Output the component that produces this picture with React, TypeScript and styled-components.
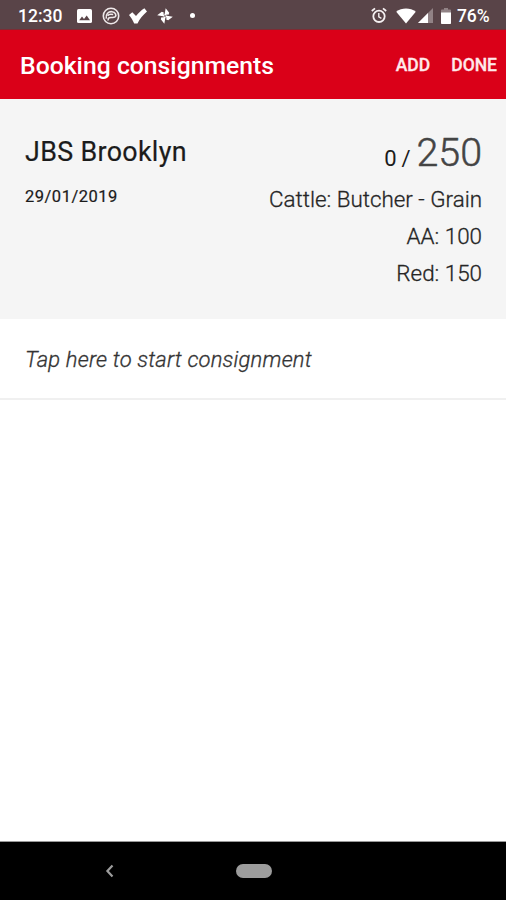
import React from 'react'
import styled, { createGlobalStyle } from 'styled-components'

const orders = ['Cattle: Butcher - Grain', 'AA: 100', 'Red: 150']

const App = () => {
  return (
    <Screen>
      <GlobalStyle />
      <StatusBar>
        <Clock>12:30</Clock>
        <Notifications>
          <PictureIcon />
          <SpiralIcon />
          <CheckIcon />
          <PinwheelIcon />
          <Dot />
        </Notifications>
        <SystemIcons>
          <AlarmIcon />
          <WifiIcon />
          <SignalIcon />
          <BatteryIcon />
        </SystemIcons>
        <Battery>76%</Battery>
      </StatusBar>
      <Header>
        <Title>Booking consignments</Title>
        <Action>ADD</Action>
        <Action>DONE</Action>
      </Header>
      <Summary>
        <div>
          <Company>JBS Brooklyn</Company>
          <BookingDate>29/01/2019</BookingDate>
        </div>
        <Totals>
          <Count>
            <Booked>0 /</Booked>
            <Total>250</Total>
          </Count>
          {orders.map((order) => (
            <Order key={order}>{order}</Order>
          ))}
        </Totals>
      </Summary>
      <StartRow>
        <StartText>Tap here to start consignment</StartText>
      </StartRow>
      <Content />
      <NavBar>
        <BackButton aria-label='Back'>
          <svg width='10' height='14' viewBox='0 0 10 14'>
            <path d='M7.5 1.5 2.4 7l5.1 5.5' fill='none' stroke='#9c9c9c' strokeWidth='2.2' />
          </svg>
        </BackButton>
        <HomeButton aria-label='Home' />
      </NavBar>
    </Screen>
  )
}

const PictureIcon = () => (
  <svg width='15' height='14' viewBox='0 0 15 14'>
    <rect width='15' height='14' rx='1.6' fill='#fff' />
    <path d='M2.2 11.3 5 7.6l2 2.3 2.7-3.5 3.3 4.9z' fill='#594448' />
  </svg>
)

const SpiralIcon = () => (
  <svg width='18' height='18' viewBox='0 0 18 18' fill='none' stroke='#eee8e9'>
    <circle cx='9' cy='9' r='7.7' strokeWidth='1.6' />
    <path d='M4.3 11.6C3.4 7 6.6 4.4 10 4.7c3.6.3 4.8 3.6 3 5.2-1.8 1.3-4-.1-5.8.9-1.1.6-1.3 1.6-1 2.6' strokeWidth='1.6' />
    <path d='M5.6 8.8c1.2-1.6 3.1-2 5.6-1.2' strokeWidth='1.6' />
  </svg>
)

const CheckIcon = () => (
  <svg width='18' height='16' viewBox='0 0 18 16'>
    <path d='M0 7 3.3 4.2 7 7.9C9.6 4.9 12.3 2.2 15.4.2L18 3.6c-4 3.4-7.2 7.3-9.5 11.8H5.2C3.8 12.4 2.2 9.6 0 7z' fill='#fff' />
  </svg>
)

// one blade, turned four times round the hub
const PinwheelIcon = () => (
  <svg width='16' height='16' viewBox='0 0 16 16'>
    {[0, 90, 180, 270].map((angle) => (
      <path key={angle} transform={`rotate(${angle + 10} 8 8)`} d='M7.3 7.5V.2l4.3 3.9-.3 2.1H9.2v1.6z' fill='#fff' />
    ))}
    <circle cx='8' cy='8' r='.8' fill='#594448' />
  </svg>
)

const AlarmIcon = () => (
  <svg width='16' height='17' viewBox='0 0 16 17' fill='none' stroke='#f5f0f1'>
    <circle cx='8' cy='9.3' r='5.7' strokeWidth='1.8' />
    <path d='M7.8 6v3.8l2.6 1.6' strokeWidth='1.4' />
    <path d='M.8 4 4 1.4M12 1.4 15.2 4' strokeWidth='1.8' />
  </svg>
)

const WifiIcon = () => (
  <svg width='20' height='16' viewBox='0 0 20 16'>
    <path d='M.2 3.7C5.8-.6 14.2-.6 19.8 3.7L10 15.4z' fill='#fff' />
  </svg>
)

const SignalIcon = () => (
  <svg width='15' height='15' viewBox='0 0 15 15'>
    <path d='M0 15 15 0v15z' fill='#918285' />
    <path d='M0 15 10 5v10z' fill='#fff' />
  </svg>
)

const BatteryIcon = () => (
  <svg width='10' height='16' viewBox='0 0 10 16'>
    <path d='M3 0h4v1.6h2.2c.5 0 .8.3.8.8V5H0V2.4c0-.5.3-.8.8-.8H3z' fill='#918285' />
    <path d='M0 4.5h10v10.7c0 .5-.3.8-.8.8H.8c-.5 0-.8-.3-.8-.8z' fill='#fff' />
  </svg>
)

const GlobalStyle = createGlobalStyle`
  * {
    box-sizing: border-box;
  }
  body {
    margin: 0;
    font-family: Roboto, "Liberation Sans", sans-serif;
    background-color: #fff;
  }
`

const Screen = styled.div`
  display: flex;
  flex-direction: column;
  width: 506px;
  height: 900px;
  overflow: hidden;
`

const StatusBar = styled.div`
  display: flex;
  align-items: center;
  flex: none;
  height: 30px;
  padding: 2px 16px 0 18px;
  color: #fff;
  background-color: #594448;
  border-bottom: 1px solid #7d2c34;
`

const Clock = styled.span`
  width: 59px;
  font-size: 17.5px;
  font-weight: 500;
`

const Notifications = styled.div`
  display: flex;
  align-items: center;
  gap: 9.5px;
`

const Dot = styled.i`
  width: 5px;
  height: 5px;
  margin-left: 8px;
  border-radius: 50%;
  background-color: #fff;
`

const SystemIcons = styled.div`
  display: flex;
  align-items: center;
  margin-left: auto;

  svg + svg {
    margin-left: 8.5px;
  }
  svg:nth-child(3) {
    margin-left: 2px;
  }
`

const Battery = styled.span`
  width: 33px;
  margin-left: 6px;
  font-size: 17.5px;
  font-weight: 500;
  letter-spacing: -0.1px;
  white-space: nowrap;
`

const Header = styled.header`
  display: flex;
  align-items: center;
  flex: none;
  height: 69px;
  padding: 2px 9px 0 20px;
  color: #fff;
  background-color: #da0018;
`

const Title = styled.h1`
  flex: 1;
  margin: 0;
  font-size: 24.75px;
  font-weight: 500;
`

const Action = styled.button`
  margin: -2px 0 0 21px;
  padding: 0;
  border: none;
  color: #ffe9eb;
  background: none;
  font-family: inherit;
  font-size: 17.5px;
  font-weight: 500;
  -webkit-text-stroke: 0.3px #ffe9eb;
`

const Summary = styled.section`
  display: flex;
  justify-content: space-between;
  flex: none;
  height: 220px;
  padding: 30px 24px 0 25px;
  color: #1b1b1b;
  background-color: #f5f5f5;
`

const Company = styled.h2`
  margin: 7px 0 0;
  font-size: 26.8px;
  font-weight: 400;
  line-height: 32px;
  letter-spacing: 0.35px;
  -webkit-text-stroke: 0.2px #1b1b1b;
`

const BookingDate = styled.div`
  margin-top: 17px;
  font-size: 16.5px;
  line-height: 24px;
  letter-spacing: 0.5px;
  -webkit-text-stroke: 0.2px #1b1b1b;
`

const Totals = styled.div`
  text-align: right;
`

const Count = styled.div`
  display: flex;
  justify-content: flex-end;
  align-items: baseline;
  gap: 6px;
  height: 52px;
  line-height: 48px;
`

const Booked = styled.span`
  font-size: 22px;
  letter-spacing: -0.2px;
`

const Total = styled.span`
  color: #444;
  font-size: 39.4px;
  font-weight: 300;
  -webkit-text-stroke: 0.5px #444;
`

const Order = styled.div`
  color: #252525;
  font-size: 22.4px;
  font-weight: 300;
  line-height: 37px;
  -webkit-text-stroke: 0.3px #252525;
`

const StartRow = styled.div`
  display: flex;
  align-items: center;
  flex: none;
  height: 81px;
  padding: 2px 0 0 25px;
  border-bottom: 2px solid #f0f0f0;
`

const StartText = styled.span`
  color: #333;
  font-size: 22px;
  font-style: italic;
  font-weight: 300;
  letter-spacing: 0.18px;
  -webkit-text-stroke: 0.3px #333;
`

const Content = styled.main`
  flex: 1;
`

const NavBar = styled.nav`
  display: flex;
  align-items: center;
  flex: none;
  height: 59px;
  padding-left: 105px;
  border-top: 1px solid #999;
  background-color: #000;
`

const BackButton = styled.button`
  display: flex;
  margin: 0;
  padding: 0;
  border: none;
  background: none;
`

const HomeButton = styled.button`
  width: 36px;
  height: 14px;
  margin: 0 0 0 121px;
  padding: 0;
  border: none;
  border-radius: 7px;
  background-color: #9c9c9c;
`

export default App
